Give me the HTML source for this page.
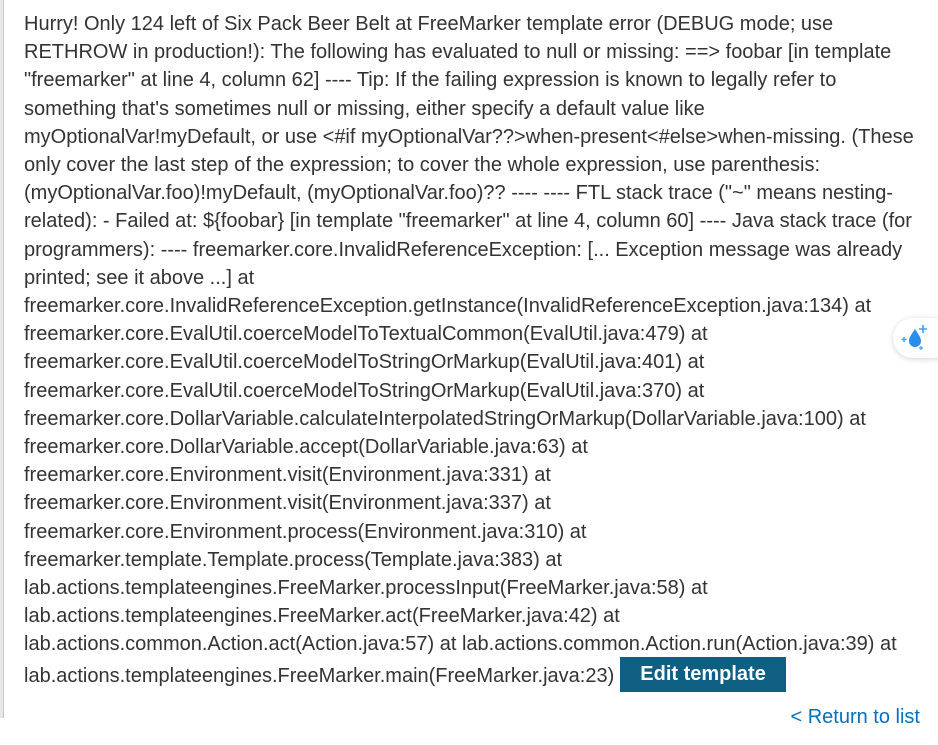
<!DOCTYPE html>
<html><head><meta charset="utf-8"><style>
html,body{margin:0;padding:0;background:#fff;width:938px;height:745px;overflow:hidden}
body{font-family:"Liberation Sans",Arial,sans-serif;color:#333;font-size:20px}
.bar{position:absolute;left:0;top:0;width:3px;height:718px;background:#e6e6e6;border-right:1px solid #c8c8c8}
.t{position:absolute;left:24px;top:10px;line-height:28.2px;white-space:nowrap}
.btn{display:inline-block;background:#0f5f83;color:#fff;font-weight:bold;font-size:20px;padding:0 20px;height:35px;line-height:35px;margin-left:0;vertical-align:middle;position:relative;top:-2px}
.ret{position:absolute;right:18px;top:706px;color:#0071bc;font-size:20px}
.fab{position:absolute;left:893px;top:318px;width:60px;height:40px;border-radius:20px;background:#fff;box-shadow:0 1px 6px rgba(0,0,0,.18)}
</style></head><body>
<div class="bar"></div>
<div class="t">
Hurry! Only 124 left of Six Pack Beer Belt at FreeMarker template error (DEBUG mode; use<br>
RETHROW in production!): The following has evaluated to null or missing: ==&gt; foobar [in template<br>
"freemarker" at line 4, column 62] ---- Tip: If the failing expression is known to legally refer to<br>
something that's sometimes null or missing, either specify a default value like<br>
myOptionalVar!myDefault, or use &lt;#if myOptionalVar??&gt;when-present&lt;#else&gt;when-missing. (These<br>
only cover the last step of the expression; to cover the whole expression, use parenthesis:<br>
(myOptionalVar.foo)!myDefault, (myOptionalVar.foo)?? ---- ---- FTL stack trace ("~" means nesting-<br>
related): - Failed at: ${foobar} [in template "freemarker" at line 4, column 60] ---- Java stack trace (for<br>
programmers): ---- freemarker.core.InvalidReferenceException: [... Exception message was already<br>
printed; see it above ...] at<br>
freemarker.core.InvalidReferenceException.getInstance(InvalidReferenceException.java:134) at<br>
freemarker.core.EvalUtil.coerceModelToTextualCommon(EvalUtil.java:479) at<br>
freemarker.core.EvalUtil.coerceModelToStringOrMarkup(EvalUtil.java:401) at<br>
freemarker.core.EvalUtil.coerceModelToStringOrMarkup(EvalUtil.java:370) at<br>
freemarker.core.DollarVariable.calculateInterpolatedStringOrMarkup(DollarVariable.java:100) at<br>
freemarker.core.DollarVariable.accept(DollarVariable.java:63) at<br>
freemarker.core.Environment.visit(Environment.java:331) at<br>
freemarker.core.Environment.visit(Environment.java:337) at<br>
freemarker.core.Environment.process(Environment.java:310) at<br>
freemarker.template.Template.process(Template.java:383) at<br>
lab.actions.templateengines.FreeMarker.processInput(FreeMarker.java:58) at<br>
lab.actions.templateengines.FreeMarker.act(FreeMarker.java:42) at<br>
lab.actions.common.Action.act(Action.java:57) at lab.actions.common.Action.run(Action.java:39) at<br>
lab.actions.templateengines.FreeMarker.main(FreeMarker.java:23)<span class="btn" style="margin-left:6px">Edit template</span>
</div>
<div class="ret">&lt; Return to list</div>
<div class="fab"><svg width="40" height="40" viewBox="0 0 40 40" style="position:absolute;left:2px;top:0">
<path d="M20 11 C17 16 14 19 14 23 a6 6 0 0 0 12 0 C26 19 23 16 20 11Z" fill="#2a8fe8"/>
<path d="M28 7v8M24 11h8" stroke="#3fa0f0" stroke-width="1.6"/>
<path d="M9 19v5M6.5 21.5h5" stroke="#3fa0f0" stroke-width="1.4"/>
<path d="M26 28v4M24 30h4" stroke="#3fa0f0" stroke-width="1.2"/>
</svg></div>
</body></html>
